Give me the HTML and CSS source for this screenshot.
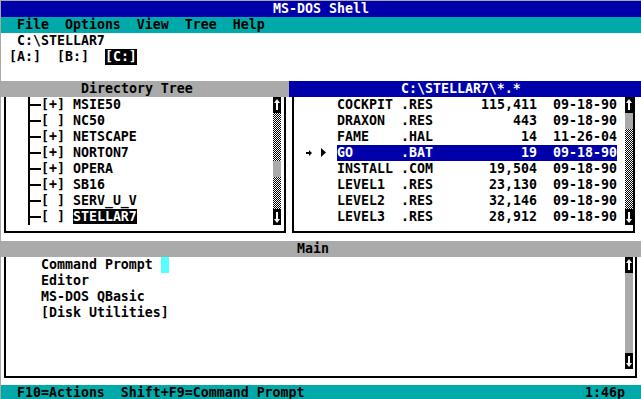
FILE: index.html
```html
<html lang="en">
<head>
  <meta charset="UTF-8">
  <title>MS-DOS Shell</title>
  <link rel="stylesheet" href="styles.css">
</head>
<body>
  <div class="screen">
    <header class="title-bar">MS-DOS Shell</header>
    <nav class="menu-bar">
      <span>File</span>
      <span>Options</span>
      <span>View</span>
      <span>Tree</span>
      <span>Help</span>
    </nav>
    <div class="drive-area">
      <div class="cur-path">C:\STELLAR7</div>
      <div class="drives">
        <span>[A:]</span>
        <span>[B:]</span>
        <span class="drive-sel">[C:]</span>
      </div>
    </div>

    <div class="panels">
      <section class="panel tree-panel">
        <div class="panel-head">Directory Tree</div>
        <div class="panel-box">
          <ul class="tree">
            <li><i class="stem"></i><span class="node">[+] MSIE50</span></li>
            <li><i class="stem"></i><span class="node">[ ] NC50</span></li>
            <li><i class="stem"></i><span class="node">[+] NETSCAPE</span></li>
            <li><i class="stem"></i><span class="node">[+] NORTON7</span></li>
            <li><i class="stem"></i><span class="node">[+] OPERA</span></li>
            <li><i class="stem"></i><span class="node">[+] SB16</span></li>
            <li><i class="stem"></i><span class="node">[ ] SERV_U_V</span></li>
            <li><i class="stem"></i><span class="node">[ ] <b class="tree-sel">STELLAR7</b></span></li>
          </ul>
          <div class="scroll">
            <div class="sb-arrow"><svg width="8" height="16" viewBox="0 0 8 16"><path d="M4 2L7 6H5V13H3V6H1Z" fill="#fff"/></svg></div>
            <div class="sb-track"><div class="sb-thumb" style="margin-top:48px"></div></div>
            <div class="sb-arrow"><svg width="8" height="16" viewBox="0 0 8 16"><path d="M4 14L7 10H5V3H3V10H1Z" fill="#fff"/></svg></div>
          </div>
        </div>
      </section>

      <section class="panel files-panel">
        <div class="panel-head head-active">C:\STELLAR7\*.*</div>
        <div class="panel-box">
          <ul class="files">
            <li class="file-row"><i class="f-mark"></i><span class="f-cells"><span class="f-name">COCKPIT</span><span class="f-ext">.RES</span><span class="f-size">115,411</span><span class="f-date">09-18-90</span></span></li>
            <li class="file-row"><i class="f-mark"></i><span class="f-cells"><span class="f-name">DRAXON</span><span class="f-ext">.RES</span><span class="f-size">443</span><span class="f-date">09-18-90</span></span></li>
            <li class="file-row"><i class="f-mark"></i><span class="f-cells"><span class="f-name">FAME</span><span class="f-ext">.HAL</span><span class="f-size">14</span><span class="f-date">11-26-04</span></span></li>
            <li class="file-row"><i class="f-mark"><svg width="43" height="16" viewBox="0 0 43 16"><path d="M12 7H16V9H12Z M15 5L18 8L15 11Z" fill="#000"/><path d="M27 3L32 7.5L27 12Z" fill="#000"/></svg></i><span class="f-cells row-sel"><span class="f-name">GO</span><span class="f-ext">.BAT</span><span class="f-size">19</span><span class="f-date">09-18-90</span></span></li>
            <li class="file-row"><i class="f-mark"></i><span class="f-cells"><span class="f-name">INSTALL</span><span class="f-ext">.COM</span><span class="f-size">19,504</span><span class="f-date">09-18-90</span></span></li>
            <li class="file-row"><i class="f-mark"></i><span class="f-cells"><span class="f-name">LEVEL1</span><span class="f-ext">.RES</span><span class="f-size">23,130</span><span class="f-date">09-18-90</span></span></li>
            <li class="file-row"><i class="f-mark"></i><span class="f-cells"><span class="f-name">LEVEL2</span><span class="f-ext">.RES</span><span class="f-size">32,146</span><span class="f-date">09-18-90</span></span></li>
            <li class="file-row"><i class="f-mark"></i><span class="f-cells"><span class="f-name">LEVEL3</span><span class="f-ext">.RES</span><span class="f-size">28,912</span><span class="f-date">09-18-90</span></span></li>
          </ul>
          <div class="scroll">
            <div class="sb-arrow"><svg width="8" height="16" viewBox="0 0 8 16"><path d="M4 2L7 6H5V13H3V6H1Z" fill="#fff"/></svg></div>
            <div class="sb-track"><div class="sb-thumb" style="margin-top:0"></div></div>
            <div class="sb-arrow"><svg width="8" height="16" viewBox="0 0 8 16"><path d="M4 14L7 10H5V3H3V10H1Z" fill="#fff"/></svg></div>
          </div>
        </div>
      </section>
    </div>

    <section class="panel main-panel">
      <div class="panel-head">Main</div>
      <div class="panel-box">
        <ul class="programs">
          <li><span>Command Prompt</span><i class="cursor"></i></li>
          <li><span>Editor</span></li>
          <li><span>MS-DOS QBasic</span></li>
          <li><span>[Disk Utilities]</span></li>
        </ul>
        <div class="scroll">
          <div class="sb-arrow"><svg width="8" height="16" viewBox="0 0 8 16"><path d="M4 2L7 6H5V13H3V6H1Z" fill="#fff"/></svg></div>
          <div class="sb-track sb-empty"></div>
          <div class="sb-arrow"><svg width="8" height="16" viewBox="0 0 8 16"><path d="M4 14L7 10H5V3H3V10H1Z" fill="#fff"/></svg></div>
        </div>
      </div>
    </section>

    <footer class="status-bar">
      <span>F10=Actions</span>
      <span>Shift+F9=Command Prompt</span>
      <span class="clock">1:46p</span>
    </footer>
  </div>
</body>
</html>
```

FILE: styles.css
```css
html, body {
  margin: 0;
  height: 100%;
  overflow: hidden;
}
body {
  padding: 1px 0 0 1px;
  box-sizing: border-box;
  background: #a8a8a8;
}
ul {
  list-style: none;
  margin: 0;
  padding: 0;
}
i, b {
  font-style: normal;
  font-weight: inherit;
}
.screen {
  width: 640px;
  height: 400px;
  display: flex;
  flex-direction: column;
  background: #fff;
  color: #000;
  font: bold 13.288px/16px "DejaVu Sans Mono", monospace;
}
.screen span, .screen li {
  white-space: pre;
}
.title-bar {
  height: 16px;
  background: #0000aa;
  color: #fff;
  text-align: center;
}
.menu-bar {
  display: flex;
  gap: 16px;
  height: 16px;
  padding-left: 16px;
  background: #00aaaa;
}
.drive-area {
  height: 48px;
}
.cur-path {
  padding-left: 16px;
}
.drives {
  display: flex;
  gap: 16px;
  padding-left: 8px;
}
.drive-sel {
  background: #000;
  color: #fff;
}

/* panels */
.panels {
  display: flex;
  height: 160px;
}
.panel {
  display: flex;
  flex-direction: column;
}
.tree-panel {
  width: 288px;
}
.files-panel {
  flex: 1;
}
.panel-head {
  height: 16px;
  background: #aaa;
}
.tree-panel .panel-head {
  padding-left: 80px;
}
.files-panel .panel-head {
  padding-left: 112px;
}
.main-panel .panel-head {
  padding-left: 296px;
}
.head-active {
  background: #0000aa;
  color: #fff;
}
.panel-box {
  display: flex;
  height: 128px;
  margin: 0 3px 8px;
  padding-bottom: 6px;
  border: 2px solid #000;
  border-top: 0;
}
.files-panel .panel-box {
  margin-right: 6px;
}
.main-panel .panel-box {
  height: 112px;
  margin: 0 4px 7px 3px;
  padding-bottom: 7px;
}

/* scrollbars */
.scroll {
  width: 8px;
  display: flex;
  flex-direction: column;
}
.tree-panel .scroll {
  margin-right: 3px;
}
.main-panel .scroll {
  margin-right: 2px;
}
.sb-arrow {
  height: 16px;
  background: #000;
}
.sb-arrow svg {
  display: block;
}
.sb-track {
  flex: 1;
  background: repeating-conic-gradient(#000 0 25%, #fff 0 50%) 0 0 / 2px 2px;
}
.sb-thumb {
  height: 16px;
  background: #aaa;
}
.sb-empty {
  background: #aaa;
}

/* directory tree */
.tree {
  flex: 1;
  margin-left: 22px;
  border-left: 2px solid #000;
}
.tree li {
  display: flex;
  align-items: center;
  height: 16px;
}
.stem {
  width: 11px;
  height: 2px;
  background: #000;
}
.tree-sel {
  background: #000;
  color: #fff;
}

/* file list */
.files {
  flex: 1;
}
.file-row {
  display: flex;
  height: 16px;
}
.f-mark {
  width: 43px;
}
.f-mark svg {
  display: block;
}
.f-cells {
  display: flex;
  width: 280px;
}
.row-sel {
  background: #0000aa;
  color: #fff;
}
.f-name {
  width: 64px;
}
.f-ext {
  width: 32px;
}
.f-size {
  width: 104px;
  text-align: right;
}
.f-date {
  width: 64px;
  margin-left: 16px;
}

/* main program group */
.programs {
  flex: 1;
  padding-left: 35px;
}
.programs li {
  display: flex;
  height: 16px;
}
.cursor {
  width: 8px;
  height: 16px;
  margin-left: 8px;
  background: #55ffff;
}

.status-bar {
  display: flex;
  gap: 16px;
  height: 16px;
  padding: 0 16px;
  background: #00aaaa;
}
.clock {
  margin-left: auto;
}
```
